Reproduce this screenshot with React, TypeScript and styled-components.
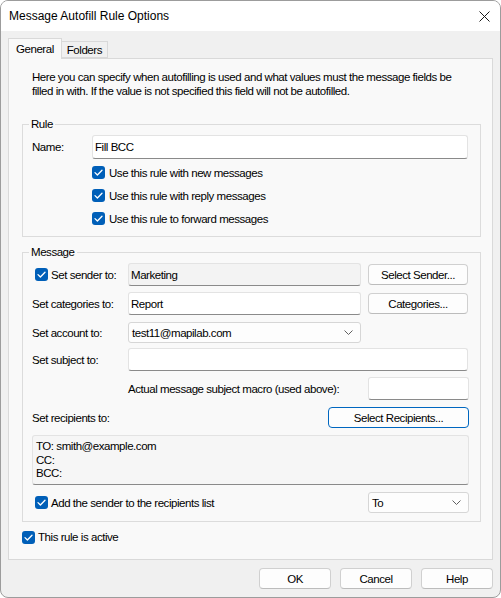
import React from 'react'
import styled, { createGlobalStyle } from 'styled-components'

const GlobalStyle = createGlobalStyle`
  * { box-sizing: border-box; }
  html, body { margin: 0; padding: 0; background: #ffffff; }
  body {
    font-family: 'Liberation Sans', Arial, sans-serif;
    font-size: 11.5px;
    letter-spacing: -0.45px;
    color: #000;
  }
`

const Check: React.FC = () => (
    <CheckBox>
        <svg width="9" height="7" viewBox="0 0 9 7">
            <path d="M1 3.6 L3.4 6 L8 1.2" fill="none" stroke="#fff" strokeWidth="1.3" strokeLinecap="round" strokeLinejoin="round" />
        </svg>
    </CheckBox>
)

const Chevron: React.FC = () => (
    <svg width="9" height="5" viewBox="0 0 9 5">
        <path d="M0.5 0.5 L4.5 4.5 L8.5 0.5" fill="none" stroke="#606060" strokeWidth="1" />
    </svg>
)

const App: React.FC = () => {
    return (
        <>
            <GlobalStyle />
            <Window>
                <TitleBar>
                    <Title>Message Autofill Rule Options</Title>
                    <CloseButton>
                        <svg width="11" height="11" viewBox="0 0 11 11">
                            <path d="M0.5 0.5 L10.5 10.5 M10.5 0.5 L0.5 10.5" stroke="#1a1a1a" strokeWidth="1" />
                        </svg>
                    </CloseButton>
                </TitleBar>
                <Body>
                    <TabStrip>
                        <Tab $active>General</Tab>
                        <Tab>Folders</Tab>
                    </TabStrip>
                    <Panel>
                        <Description>
                            Here you can specify when autofilling is used and what values must the message fields be
                            filled in with. If the value is not specified this field will not be autofilled.
                        </Description>

                        <Group $top={19} $pad="4px 11px 6px 9px">
                            <Legend>Rule</Legend>
                            <Row $h={24}>
                                <Label $w={60}>Name:</Label>
                                <TextInput $w={376} $h={24} defaultValue="Fill BCC" />
                            </Row>
                            <CheckRow $indent={60} $top={2}>
                                <Check />
                                <span>Use this rule with new messages</span>
                            </CheckRow>
                            <CheckRow $indent={60}>
                                <Check />
                                <span>Use this rule with reply messages</span>
                            </CheckRow>
                            <CheckRow $indent={60}>
                                <Check />
                                <span>Use this rule to forward messages</span>
                            </CheckRow>
                        </Group>

                        <Group $top={8} $pad="4px 11px 8px 9px">
                            <Legend>Message</Legend>
                            <Row $h={23}>
                                <Label $w={96}>
                                    <SenderCheck>
                                        <Check />
                                        <span>Set sender to:</span>
                                    </SenderCheck>
                                </Label>
                                <TextInput $w={233} $h={23} $muted defaultValue="Marketing" readOnly />
                                <Button $w={100} $left={7}>Select Sender...</Button>
                            </Row>
                            <Row $h={23} $top={6}>
                                <Label $w={96}>Set categories to:</Label>
                                <TextInput $w={233} $h={23} defaultValue="Report" />
                                <Button $w={100} $left={7}>Categories...</Button>
                            </Row>
                            <Row $h={21} $top={7}>
                                <Label $w={96}>Set account to:</Label>
                                <Combo $w={233}>
                                    <span>test11@mapilab.com</span>
                                    <Chevron />
                                </Combo>
                            </Row>
                            <Row $h={23} $top={5}>
                                <Label $w={96}>Set subject to:</Label>
                                <TextInput $w={340} $h={23} defaultValue="" />
                            </Row>
                            <Row $h={23} $top={6}>
                                <Label $w={96} />
                                <span>Actual message subject macro (used above):</span>
                                <TextInput $w={101} $h={23} $push defaultValue="" />
                            </Row>
                            <Row $h={21} $top={7}>
                                <Label $w={96}>Set recipients to:</Label>
                                <Button $w={141} $push $focused>Select Recipients...</Button>
                            </Row>
                            <Recipients>
                                <div>TO: smith@example.com</div>
                                <div>CC:</div>
                                <div>BCC:</div>
                            </Recipients>
                            <Row $h={21} $top={7}>
                                <SenderCheck>
                                    <Check />
                                    <span>Add the sender to the recipients list</span>
                                </SenderCheck>
                                <Combo $w={101} $push>
                                    <span>To</span>
                                    <Chevron />
                                </Combo>
                            </Row>
                        </Group>

                        <ActiveRow>
                            <Check />
                            <span>This rule is active</span>
                        </ActiveRow>
                    </Panel>
                    <Footer>
                        <Button $w={72}>OK</Button>
                        <Button $w={72}>Cancel</Button>
                        <Button $w={72}>Help</Button>
                    </Footer>
                </Body>
            </Window>
        </>
    )
}

const Window = styled.div`
    width: 501px;
    height: 598px;
    border: 1px solid #9c9c9c;
    border-radius: 8px;
    overflow: hidden;
    display: flex;
    flex-direction: column;
    background: #f0f0f0;
`

const TitleBar = styled.div`
    height: 30px;
    flex: none;
    background: #ffffff;
    display: flex;
    align-items: center;
    justify-content: space-between;
    padding-left: 8px;
`

const Title = styled.span`
    font-size: 12px;
    letter-spacing: 0;
    color: #000;
`

const CloseButton = styled.div`
    width: 46px;
    height: 30px;
    display: flex;
    align-items: center;
    justify-content: center;
    margin-right: -7px;
`

const Body = styled.div`
    flex: 1;
    padding: 7px 7px 0 7px;
    display: flex;
    flex-direction: column;
`

const TabStrip = styled.div`
    display: flex;
    align-items: flex-end;
    height: 21px;
    margin-bottom: -1px;
    position: relative;
    z-index: 1;
`

const Tab = styled.div<{ $active?: boolean }>`
    height: ${p => (p.$active ? '21px' : '17px')};
    margin-bottom: ${p => (p.$active ? '0' : '1px')};
    margin-left: ${p => (p.$active ? '0' : '-1px')};
    padding: ${p => (p.$active ? '0 7px' : '1px 5px 0 5px')};
    display: flex;
    align-items: center;
    border: 1px solid #d9d9d9;
    border-bottom: ${p => (p.$active ? 'none' : '1px solid #d9d9d9')};
    background: ${p => (p.$active ? '#f9f9f9' : '#f0f0f0')};
`

const Panel = styled.div`
    height: 502px;
    flex: none;
    background: #f9f9f9;
    border: 1px solid #d9d9d9;
    padding: 11px 11px 0 13px;
`

const Description = styled.p`
    margin: 0 0 0 10px;
    max-width: 430px;
    line-height: 14px;
`

const Group = styled.fieldset<{ $top: number; $pad: string }>`
    margin: ${p => p.$top}px 0 0 0;
    padding: ${p => p.$pad};
    border: 1px solid #dcdcdc;
    min-width: 0;
`

const Legend = styled.legend`
    padding: 0 2px;
    margin-left: -3px;
    line-height: 14px;
`

const Row = styled.div<{ $h: number; $top?: number }>`
    display: flex;
    align-items: center;
    height: ${p => p.$h}px;
    margin-top: ${p => p.$top ?? 0}px;
`

const Label = styled.span<{ $w: number }>`
    width: ${p => p.$w}px;
    flex: none;
`

const TextInput = styled.input<{ $w: number; $h: number; $muted?: boolean; $push?: boolean }>`
    width: ${p => p.$w}px;
    height: ${p => p.$h}px;
    margin-left: ${p => (p.$push ? 'auto' : '0')};
    padding: 0 2px;
    font: inherit;
    letter-spacing: inherit;
    color: #000;
    background: ${p => (p.$muted ? '#f3f3f3' : '#ffffff')};
    border: 1px solid #e3e3e3;
    border-bottom-color: #8a8a8a;
    border-radius: 3px;
    outline: none;
`

const Button = styled.button<{ $w: number; $left?: number; $push?: boolean; $focused?: boolean }>`
    width: ${p => p.$w}px;
    height: 21px;
    margin-left: ${p => (p.$push ? 'auto' : `${p.$left ?? 0}px`)};
    padding: 0;
    font: inherit;
    letter-spacing: inherit;
    color: #000;
    background: #fdfdfd;
    border: 1px solid ${p => (p.$focused ? '#0067c0' : '#d0d0d0')};
    border-bottom-color: ${p => (p.$focused ? '#0067c0' : '#bcbcbc')};
    border-radius: 4px;
`

const Combo = styled.div<{ $w: number; $push?: boolean }>`
    width: ${p => p.$w}px;
    height: 21px;
    margin-left: ${p => (p.$push ? 'auto' : '0')};
    display: flex;
    align-items: center;
    justify-content: space-between;
    padding: 0 7px 0 3px;
    background: #fdfdfd;
    border: 1px solid #d6d6d6;
    border-radius: 3px;
`

const CheckBox = styled.span`
    width: 13px;
    height: 13px;
    flex: none;
    border-radius: 3px;
    background: #005fb8;
    display: flex;
    align-items: center;
    justify-content: center;
`

const CheckRow = styled.div<{ $indent: number; $top?: number }>`
    display: flex;
    align-items: center;
    gap: 4px;
    height: 23px;
    margin-left: ${p => p.$indent}px;
    margin-top: ${p => p.$top ?? 0}px;
`

const SenderCheck = styled.span`
    display: flex;
    align-items: center;
    gap: 3px;
    margin-left: 3px;
`

const Recipients = styled.div`
    width: 437px;
    height: 50px;
    margin-top: 7px;
    padding: 4px 3px 0 3px;
    line-height: 13.5px;
    background: #f6f6f6;
    border: 1px solid #e3e3e3;
    border-bottom-color: #8a8a8a;
    border-radius: 3px;
`

const ActiveRow = styled.div`
    display: flex;
    align-items: center;
    gap: 3px;
    height: 14px;
    margin-top: 8px;
`

const Footer = styled.div`
    display: flex;
    justify-content: flex-end;
    gap: 9px;
    margin-top: 8px;
`

export default App
